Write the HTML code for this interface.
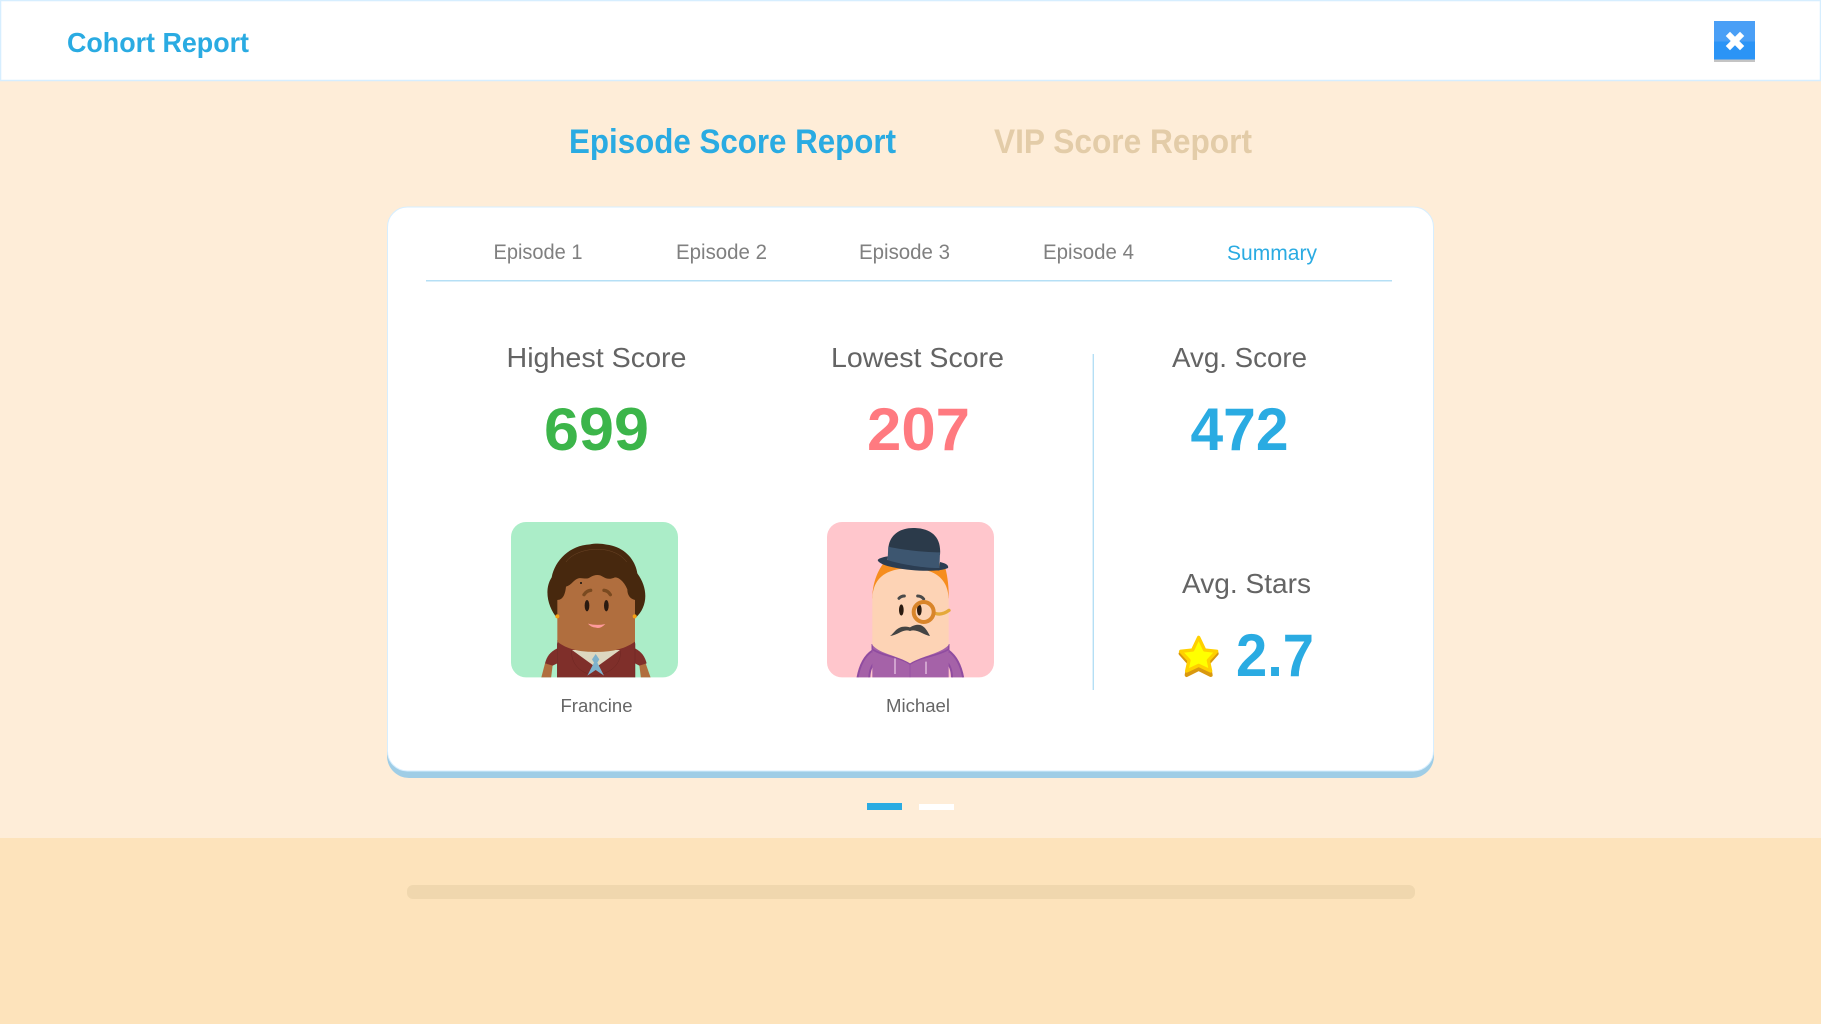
<!DOCTYPE html>
<html lang="en"><head><meta charset="utf-8"><title>Cohort Report</title>
<style>html,body{margin:0;padding:0;width:1821px;height:1024px;overflow:hidden;background:#feedd8}
svg{display:block}text{font-family:"Liberation Sans",sans-serif}</style></head><body>
<svg width="1821" height="1024" viewBox="0 0 1821 1024" xmlns="http://www.w3.org/2000/svg">
<rect width="1821" height="1024" fill="#feedd8"/>
<rect y="838" width="1821" height="186" fill="#fde3bb"/>
<rect x="407" y="885" width="1008" height="14" rx="6" fill="#f0d7ae"/>
<rect x="0.5" y="0.5" width="1820" height="80" fill="#fff" stroke="#d6eeff" stroke-width="1.5"/>
<text x="67" y="52" font-size="27.5" font-weight="700" fill="#2aabe2" textLength="182" lengthAdjust="spacingAndGlyphs">Cohort Report</text>
<rect x="1714" y="22" width="41" height="40" fill="#c4c4c4"/>
<rect x="1714" y="21" width="41" height="38.5" fill="#2b94f6"/>
<rect x="1714" y="21" width="41" height="20.5" fill="#4a9ff6"/>
<path d="M1730 36L1740 46M1740 36L1730 46" stroke="#fff" stroke-width="6" stroke-linecap="square"/>
<text x="569" y="153" font-size="34" font-weight="700" fill="#2aabe2" textLength="327" lengthAdjust="spacingAndGlyphs">Episode Score Report</text>
<text x="994" y="153" font-size="34" font-weight="700" fill="#e3cca8" textLength="258" lengthAdjust="spacingAndGlyphs">VIP Score Report</text>
<rect x="387" y="210" width="1047" height="568" rx="22" fill="#9fcde6"/>
<rect x="387.5" y="207" width="1046" height="564" rx="20" fill="#fff" stroke="#d6eeff"/>
<g font-size="21" fill="#808080">
<text x="493.5" y="259" textLength="89" lengthAdjust="spacingAndGlyphs">Episode 1</text>
<text x="676" y="259" textLength="91" lengthAdjust="spacingAndGlyphs">Episode 2</text>
<text x="859" y="259" textLength="91" lengthAdjust="spacingAndGlyphs">Episode 3</text>
<text x="1043" y="259" textLength="91" lengthAdjust="spacingAndGlyphs">Episode 4</text>
<text x="1227" y="260" textLength="90" lengthAdjust="spacingAndGlyphs" fill="#2aabe2">Summary</text>
</g>
<rect x="426" y="280" width="966" height="1.5" fill="#b5dff5"/>
<rect x="1092.6" y="354" width="1.4" height="336" fill="#b5dff5"/>
<g font-size="27.5" fill="#646464">
<text x="506.5" y="367" textLength="180" lengthAdjust="spacingAndGlyphs">Highest Score</text>
<text x="831" y="367" textLength="173" lengthAdjust="spacingAndGlyphs">Lowest Score</text>
<text x="1172" y="367" textLength="135" lengthAdjust="spacingAndGlyphs">Avg. Score</text>
<text x="1182" y="593" textLength="129" lengthAdjust="spacingAndGlyphs">Avg. Stars</text>
</g>
<g font-size="60" font-weight="700">
<text x="544" y="450" textLength="105" lengthAdjust="spacingAndGlyphs" fill="#3cb54a">699</text>
<text x="867" y="450" textLength="103" lengthAdjust="spacingAndGlyphs" fill="#ff7a80">207</text>
<text x="1190.5" y="450" textLength="98" lengthAdjust="spacingAndGlyphs" fill="#2aabe2">472</text>
<text x="1236" y="676" textLength="78" lengthAdjust="spacingAndGlyphs" fill="#2aabe2">2.7</text>
</g>
<g font-size="18" fill="#666">
<text x="560.5" y="712" textLength="72" lengthAdjust="spacingAndGlyphs">Francine</text>
<text x="886" y="712" textLength="64" lengthAdjust="spacingAndGlyphs">Michael</text>
</g>
<rect x="867" y="803" width="35" height="7" fill="#2aabe2"/>
<rect x="919" y="804" width="35" height="6" fill="#fff"/>

<!-- Star -->
<g transform="translate(1150,560) scale(.3333)">
<path d="M146 236L164 272L200 276L175 304L182 340L146 322L110 340L117 304L92 276L128 272Z" transform="translate(0,5)" fill="#d9980f" stroke="#d9980f" stroke-width="12" stroke-linejoin="round"/>
<path d="M146 232L164 270L200 274L175 301L182 333L146 316L110 333L117 301L92 274L128 270Z" fill="#ffff00" stroke="#ffd000" stroke-width="10" stroke-linejoin="round"/>
</g>

<!-- Francine -->
<svg x="480" y="500" width="240" height="240" viewBox="0 0 720 720">
<defs><clipPath id="a"><rect x="93" y="66" width="501" height="466" rx="45"/></clipPath><clipPath id="b"><rect x="81" y="66" width="501" height="466" rx="45"/></clipPath></defs>
<rect x="93" y="66" width="501" height="466" rx="45" fill="#abedc8"/>
<g clip-path="url(#a)">
<path d="M232 355C205 325 190 270 215 232C225 180 270 136 330 133C345 130 365 130 380 134C430 140 465 175 472 220C505 265 505 320 465 355Z" fill="#47280e"/>
<path d="M195 490L183 536L213 536L218 495Z" fill="#b06e3e"/>
<path d="M497 490L513 536L483 536L478 495Z" fill="#b06e3e"/>
<path d="M232 445C210 455 200 470 195 490L218 497L232 490Z" fill="#7f2f2a"/>
<path d="M465 445C485 455 495 470 500 490L478 497L465 490Z" fill="#7f2f2a"/>
<rect x="232" y="420" width="233" height="116" fill="#7f2f2a"/>
<path d="M276 450L420 450L348 502Z" fill="#ddd8c0"/>
<path d="M275 452C272 490 300 520 345 527C395 520 425 490 421 452M232 430L232 536M465 430L465 536" fill="none" stroke="#6e2723" stroke-width="1.5"/>
<path d="M232 300C245 300 255 290 258 260C275 255 282 238 295 235C308 232 318 240 330 232C342 224 358 222 368 230C380 238 392 238 405 232C420 232 435 250 442 268C442 285 450 296 465 300L465 425C430 450 390 456 345 456C300 456 260 448 232 425Z" fill="#b06e3e"/>
<path d="M347 462L358 478L352 488L372 527L347 510L322 527L342 488L336 478Z" fill="#7eb2cc"/>
<circle cx="232" cy="349" r="6" fill="#f5a013"/><circle cx="464" cy="349" r="6" fill="#f5a013"/>
<circle cx="303" cy="249" r="3" fill="#111"/>
<path d="M312 284Q320 272 332 271M372 271Q384 272 391 284" stroke="#7a4a20" stroke-width="10" fill="none" stroke-linecap="round"/>
<ellipse cx="321" cy="317" rx="7" ry="17" fill="#2a1a10"/><ellipse cx="379" cy="317" rx="7" ry="17" fill="#2a1a10"/>
<path d="M324 371Q350 378 376 372Q362 387 348 383Q332 382 324 371Z" fill="#ff9a9a"/>
<path d="M258 186C290 140 400 130 440 186" fill="none" stroke="#6c4526" stroke-width="1.5"/>
</g>
</svg>

<!-- Michael -->
<svg x="800" y="500" width="240" height="240" viewBox="0 0 720 720">
<rect x="81" y="66" width="501" height="466" rx="45" fill="#ffc6cc"/>
<g clip-path="url(#b)">
<path d="M217 295C217 250 232 215 250 190L432 190C442 220 447 260 446 295Z" fill="#f68d1e"/>
<path d="M217 452C190 470 178 500 172 536L208 536C208 510 215 495 230 480Z" fill="#a562a8" stroke="#8f4ca0" stroke-width="6"/>
<path d="M446 452C470 470 484 500 490 536L456 536C456 510 450 495 435 480Z" fill="#a562a8" stroke="#8f4ca0" stroke-width="6"/>
<path d="M217 432L446 432L446 536L217 536Z" fill="#a562a8"/>
<path d="M217 432L217 448C250 470 300 470 330 492C360 470 410 470 446 448L446 432" fill="none" stroke="#8f4ca0" stroke-width="5"/>
<path d="M217 300C217 250 240 205 330 205C420 205 446 250 446 300L446 435C420 462 370 466 330 490C290 466 240 462 217 435Z" fill="#fdd3b5"/>
<path d="M285 475L285 522M378 485L378 522" stroke="#d8b0d6" stroke-width="5"/>
<path d="M330 490L330 536" stroke="#8f4ca0" stroke-width="2"/>
<path d="M265 145C268 105 300 82 345 84C395 86 425 112 420 165L265 165Z" fill="#2b3a4a"/>
<path d="M265 140C310 150 380 157 420 157L418 212L262 192Z" fill="#3d5670"/>
<path d="M233 180C236 174 255 170 264 169L262 180C310 195 380 205 418 204L420 186C438 190 447 196 444 204C420 216 340 214 290 204C260 199 235 190 233 180Z" fill="#2b3d52"/>
<path d="M297 295Q303 288 313 288M353 288Q364 288 371 297" stroke="#4a4a4a" stroke-width="9" fill="none" stroke-linecap="round"/>
<ellipse cx="304" cy="330" rx="7" ry="17" fill="#2a1a10"/><ellipse cx="358" cy="330" rx="7" ry="17" fill="#2a1a10"/>
<path d="M405 340C420 345 435 340 447 331" stroke="#e5a93a" stroke-width="10" stroke-linecap="round" fill="none"/>
<circle cx="371" cy="336" r="30" fill="none" stroke="#d9852a" stroke-width="12"/>
<path d="M270 408C285 398 292 372 330 382C365 362 378 385 390 408C370 405 350 385 330 393C310 385 295 405 270 408Z" fill="#444"/>
</g>
</svg>
</svg>
</body></html>
